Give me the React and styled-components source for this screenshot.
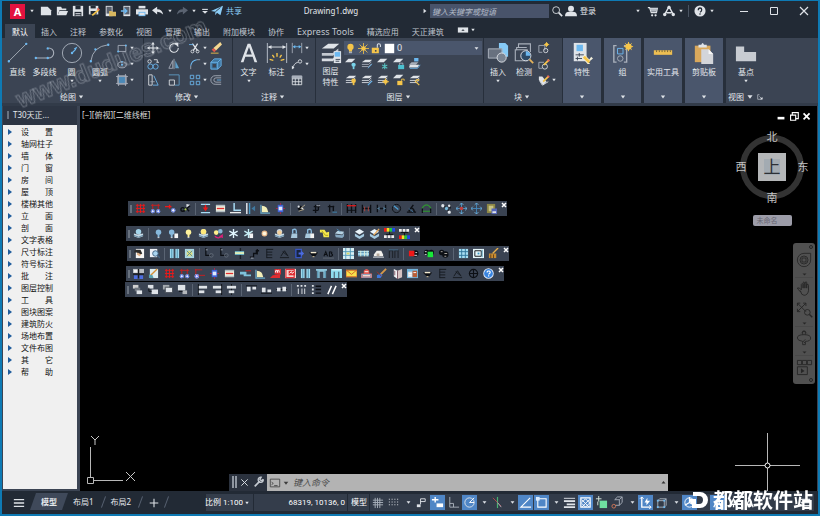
import React from 'react';
import styled, { createGlobalStyle } from 'styled-components';

const GlobalStyle = createGlobalStyle`
  * { box-sizing: border-box; }
  body { margin: 0; background: #000; overflow: hidden; }
  button, input, select {
    font: inherit; color: inherit; background: none; border: 0; padding: 0; margin: 0;
  }
  body, button, input { font-family: "Noto Sans", "Noto Sans CJK SC", sans-serif; font-size: 8px; }
`;

/* ---------- icon drawing ---------- */

const W = '#dfe3e8';
const G = '#a9b0bb';
const B = '#6cb8f0';
const SB = '#a8dcf5';
const Y = '#f5c54a';
const R = '#f01818';
const K = '#0c0f14';
const N = 'none';

const ring = (x, y, r) =>
  `M${x - r} ${y}a${r} ${r} 0 1 0 ${2 * r} 0a${r} ${r} 0 1 0 ${-2 * r} 0z`;
const box = (x, y, w, h) => `M${x} ${y}h${w}v${h}h${-w}z`;
const s = (d, color = W, width = 1) => ({ d, stroke: color, fill: N, width });
const f = (d, color = W) => ({ d, stroke: N, fill: color, width: 0 });

const stack = (color) => [
  f('M5 2h8l-3 3H1z', W),
  s('M1 7.5h8l3-3M1 10h8l3-3', color),
];
const bulb = (c, x = 6) => [f(ring(x, 4.5, 3), c), f(box(x - 1, 7, 2, 3), c), f(box(x - 1, 10, 2, 1), W)];
const cloud = (c) => [f(ring(6, 4, 3), c), f('M1 6l4 1 6-1v3l-5 2-5-2z', '#c6d8e4'), s('M1 8l5 2 5-2', '#56809c')];
const blueDots = [f(ring(3, 9, 2.2), '#e8ecff'), s(ring(3, 9, 1.7), '#4060d8'), f(ring(9, 9, 2.2), '#e8ecff'), s(ring(9, 9, 1.7), '#4060d8')];
const flake = (c) => [s('M6 1v10M1.500 3.500l9 5M1.500 8.500l9-5', c, 1.5)];
const page = f('M7 6h4v5H7z', '#f4f4f4');
const stars = [s('M4 4l4 4M8 4l-4 4M6 3v6M3 6h6', K, 1.5), f(ring(8, 6, 1.2), W), f(ring(4, 4, 1.2), W)];

const icons = {
  /* quick access, 14 grid */
  fresh: [f('M1 2h8l4 4v6H1z')],
  open: [f('M1 2h5l1 2h5v2H4l-2 6H1z'), f('M4 7h10l-2 5H2z')],
  save: [f('M1 1h12v12H1z'), f(box(4, 1, 6, 4), '#222a35'), f(box(3, 8, 8, 5), '#222a35'), s('M4 10h6M4 12h6', W)],
  saveas: [f('M1 1h11v10H1z'), f(box(3, 1, 6, 3), '#222a35'), f(box(3, 7, 7, 4), '#222a35'), s('M5 12l8-7', Y, 2), s('M11 4l2 2', '#e06050', 2)],
  webOpen: [f(box(2, 1, 8, 12)), f(box(3, 2, 6, 8), '#59616e'), f('M6 7h3l1 1h4v5H6z', '#d8b860')],
  webSave: [f(box(4, 1, 8, 12)), f(box(5, 2, 6, 9), '#59616e'), s('M1 7h6M5 4l3 3-3 3', B, 1.5)],
  print: [f(box(3, 1, 8, 3)), f(box(0, 5, 14, 6)), f(box(3, 8, 8, 5), '#6cb8f0'), f(box(4, 9, 6, 3), W)],
  undo: [f('M0 6l6-4v3q6 0 7 6-3-3-7-3v3z')],
  redo: [f('M14 6L8 2v3q-6 0-7 6 3-3 7-3v3z', '#5a6371')],
  plane: [f('M0 7L14 1l-3 11-4-3-2 3V8z', '#8ccdf6'), s('M5 8l6-5', '#222a35')],
  search: [s(ring(6, 6, 4)), s('M9 9l4 4', W, 2)],
  user: [f(ring(7, 4.5, 3.5)), f('M0 13q0-5 5-5h4q5 0 5 5z')],
  cart: [s('M1 3h2l2 6h6l1-5H4', W, 1.5), f('M4 4h8l-1 4H5z', '#b4bac2'), f(ring(6, 12, 1.3)), f(ring(10, 12, 1.3))],
  autodesk: [s('M2 11L7 2l5 9M4 9h6', W, 1.6), f(ring(7, 3, 2)), f(ring(2, 11, 2)), f(ring(12, 11, 2))],
  help: [f(ring(7, 7, 6.5)), s('M5 6q0-2.500 2-2.500t2 2-2 3', '#222a35', 1.5), f(box(6, 10, 2, 1), '#222a35')],
  min: [s('M3 7.5h8')],
  max: [s(box(3.5, 3.5, 7, 7))],
  close: [s('M3 3l8 8M11 3l-8 8', W, 1.2)],
  ribbonMode: [f(box(1, 4, 12, 6)), f('M5 8l2-2 2 2z', '#222a35')],
  caret: [f('M4 5h6l-3 4z')],
  caretDark: [f('M3 5h8l-4 5z', '#3c3c3c')],
  caretDim: [f('M3 5h8l-4 4z', '#262626')],
  caretUp: [f('M3 9h8l-4-5z', '#333')],
  caretLine: [f('M3 7h8l-4 4z'), f(box(3, 4, 8, 1.5))],
  tri: [f('M5 4l4 3-4 3z')],

  /* ribbon large, 24 grid */
  line: [s('M2 21L21 2', G), f(ring(2, 21, 1.3), B), f(ring(21, 2, 1.3), B)],
  pline: [s('M2 17.500h14a5 5 0 0 0 0-11', G, 1.2), f(ring(2, 17.5, 1.3), B), f(ring(15, 17.5, 1.3), B), f(ring(15, 7, 1.3), B)],
  circle: [s(ring(12, 12, 10.5), G), s('M12 12l4-4', B, 1.3), f(ring(12, 12, 1.3), B), f('M18 5l-4 2 2 2z', B)],
  arc: [s('M2 21Q4 5 21 3', G), f(ring(2, 21, 1.3), B), f(ring(7, 8, 1.3), B), f(ring(21, 3, 1.3), B)],
  text: [f('M3 22L10.500 2h3L21 22h-3l-2-6H8l-2 6zM9 13.500h6L12 5.500z')],
  dim: [s('M1.500 1v22M22.500 1v22', G, 1.2), s('M3 5.500h18', W), f('M2 5.500l4-2v4zM22 5.500l-4-2v4z'), s('M12 12v4M7 14l2 3M17 14l-2 3M4 19l4 1M20 19l-4 1', Y, 1.5)],
  layerProps: [f('M9 2h12l-6 5H2z'), f('M2 12h12l6-5v3l-6 5H2z', '#c4c9d0'), f('M2 18h12l3-3v3l-3 3H2z', '#d8dce2'), f(box(15, 10, 8, 13)), f(box(16, 11, 6, 5), B), s('M17 19h5M17 21h4', '#3b4453')],
  insert: [f('M13 1h7l3 3v12H13z', '#86caf6'), f(box(1, 7, 15, 11), '#68717f'), s(box(1.5, 7.5, 15, 10), G), f(ring(16, 17, 5), '#7a8492'), s(ring(16, 17, 5), W)],
  inspect: [s('M6 6V2h13v9M4 9V6h11', G, 1.2), s('M2.500 8.500h13v12h-13z', G, 1.2), f(ring(14, 15, 5.5), '#2d4964'), s(ring(14, 15, 5.5), W), f('M14 15v-5a5 5 0 0 1 5 5z', B), s('M18 19l4 4', '#e3b25b', 2)],
  props: [f(box(3, 1, 14, 20), W), f(box(6, 3, 7, 7), B), s('M5 14h9M9 12v4M5 18h7M7 16v4', '#3b4453'), f('M12 17l3-3 5 5 2-3 2 2-5 4 2 2-2 1z', '#f4f0dc'), s('M14 16l6 6', Y, 3)],
  group: [s('M5 4H2v18h3M13 4h3v18h-3', G, 1.5), s(box(6, 7, 6, 6), B), s(ring(9, 18, 3), G), f(ring(18, 5, 3.5), Y), s('M18 0v10M13 5h10M14.500 1.500l7 7M21.500 1.500l-7 7', Y)],
  measure: [f(box(2, 9, 20, 5), '#eebf52'), s('M5 9v2M8 9v2M11 9v2M14 9v2M17 9v2M20 9v2', '#6b5d35')],
  paste: [f(box(2, 4, 17, 18), '#d9a85c'), f('M6 6V3h3q1.500-4 3 0h3v3z', W), f('M9 8h8l5 5v11H9z', '#d3d5da'), f('M17 8v5h5z', '#f7f7f7')],
  base: [f('M1 5h9v6h13v10H1z', '#c8ccd2')],

  /* ribbon small, 14 grid */
  rect: [s(box(2.5, 4, 9, 7), G), f(ring(2.5, 11, 1.2), B), f(ring(11.5, 4, 1.2), B)],
  ellipse: [s('M2 8a5 3.500 0 1 0 10 0a5 3.500 0 1 0 -10 0z', G), f(ring(7, 8, 1.2), B), f(ring(7, 4.5, 1), B)],
  hatch: [f(box(3, 3, 8, 8), '#4b89b8'), s('M2 2h10v10H2zM3 0v14M11 0v14M0 3h14M0 11h14', G)],
  move: [s('M7 1v12M1 7h12', W, 1.2), f('M7 0l2 3H5zM7 14l2-3H5zM0 7l3-2v4zM14 7l-3-2v4z')],
  rotate: [s('M10 3A5 5 0 1 0 12 7', W, 1.2), f('M7 1h5v5z')],
  trim: [s('M4 2l6 8M10 2L5 10', W, 1.5), s(ring(4, 11, 1.7)), s(ring(10, 11, 1.7)), s('M0 3h5', B)],
  erase: [f('M12 0l2 3-7 7-3-3z', '#f3d690'), f('M4 7l3 3-2 2-3-3z', '#e0584c'), s('M1 13h9', Y)],
  copy: [s(ring(3, 4, 2)), s('M8 2h4v3M11 5h3', W), s(ring(4, 10, 3), B), s(ring(10, 10, 3), B)],
  mirror: [s('M1 12L5.500 3v9zM7 1v12', G), f('M8.500 12V3L13 12z', '#5f9fca')],
  fillet: [s('M2 13V9', G), s('M2 9Q3 3 9 2', B, 1.2), s('M9 2h4', G)],
  solid: [f('M1 5l4-4h8v8l-4 4H1z', '#3e749d'), s('M1 5h8v8H1zM1 5l4-4h8v8l-4 4M9 5l4-4', B), f(box(3, 7, 4, 4), '#3b4453')],
  stretch: [s('M2 1h4v12H2z', W), s('M8 2l5 11H7', B), s('M4 9h5', G)],
  scale: [s('M1 1h12v12H8', '#5f9fca'), s(box(1.500, 7, 6, 6))],
  array: [s('M1.500 1.500h4v4h-4zM8.500 1.500h4v4h-4zM1.500 8.500h4v4h-4zM8.500 8.500h4v4h-4z', B)],
  offset: [s('M13 2H6a5 5 0 0 0 0 10h7', G), s('M13 4.500H7a2.500 2.500 0 0 0 0 5h6', G), s('M13 7H8', B)],
  linear: [s('M1.500 1v12M12.500 1v12', G), s('M3 5.500h8', B), f('M2 5.500l3-2v4zM12 5.500l-3-2v4z', B)],
  leader: [s(ring(10.5, 4, 2)), s('M8 5q-5 1-6 8', W), f('M1 13v-4l3 2z')],
  table: [s('M1.500 2.500h11v10h-11zM1.500 5.500h11M1.500 9h11M5 5v8M9 5v8'), f(box(1, 2, 12, 3), G)],
  bulbBig: [f(ring(7, 5, 4), Y), f(box(5, 8, 4, 3), Y), f(box(5, 11, 4, 2), G)],
  sun: [f(ring(7, 7, 3), Y), s('M7 0v14M0 7h14M2 2l10 10M12 2L2 12', Y)],
  unlock: [f(box(1, 6, 9, 7), Y), s('M8 6V3q0-2 2-2t2 2v2', W, 1.3), f(box(5, 9, 2, 2), '#3b4453')],
  white: [f(box(1, 1, 12, 12), '#fff')],
  lOff: [f('M4 1h8l-4 4H0z'), f(ring(10, 8, 2.5), '#79d3ea'), f(box(9, 10, 2, 3), '#79d3ea')],
  lIso: [...stack(G), s('M8 12l5-5', B)],
  lFreeze: [f('M4 1h8l-4 4H0z'), s('M9 6v7M6 8l6 4M6 12l6-4', '#57c0c0', 1.3)],
  lLock: [f('M4 1h8l-4 4H0z'), f(box(6, 8, 7, 5), '#4cc0d0'), s('M7.500 8V6h4v2', G)],
  lMatch: [f('M3 5h8l-3 3H0z', G), f('M6 0h5v4H6z', B), f('M1 8h11l-2 3H0z'), s('M1 12h9l3-4', B)],
  lOn: [...stack(W), f(ring(10, 8, 2.7), Y), f(box(9, 10, 2, 3), Y)],
  lUniso: [...stack(W), s('M8 13l5-5', B, 1.3)],
  lThaw: [...stack(W), f(ring(10, 9, 2.5), Y), s('M10 5v8M6 9h8', Y)],
  lUnlock: [f('M4 1h8l-4 4H0z'), f(box(5, 8, 6, 5), Y), s('M10 8V6h3v2', Y)],
  lPrev: [...stack(W), s('M7 8l5 5M8 7h4', Y, 1.5)],
  bCreate: [s('M1 4h7v6M1 4v8h4', G), s(ring(9, 10, 2.5)), f(ring(10, 3, 2), Y), s('M10 0v6M7 3h6', Y)],
  bEdit: [s('M1 5h6M1 5v7h4', G), s(ring(8, 10, 3)), s('M7 8l6-6', Y, 2), s('M11 2l2 2', '#e56b59', 2)],
  bAttr: [f('M1 3h4l5 6-4 4-5-6z'), s('M6 9l6-6', Y, 2), s('M11 2l2 2', '#e56b59', 2), s('M2 8l3 5 7-4', W)],
  launch: [s('M3 3h3M3 3v8h8V8M6 6l4 4'), f('M11 11V7l-4 4z')],

  /* floating bars, 12 grid */
  grid: [s('M2.500 1v10M6 1v10M9.500 1v10M1 2.500h10M1 6h10M1 9.500h10', R)],
  axis: [s('M1 2.500h10M3 1v6M9 1v6', '#d01c1c'), ...blueDots],
  axisOne: [s('M0 4h7M5 2v4', R, 1.5), f(ring(9, 8, 2.4), '#f0f2ff'), s(ring(9, 8, 1.9), '#4060d8')],
  axisRow: [s('M1 2h8M2 1v8M5 8h7', '#d01c1c'), f(ring(3, 9, 2.4), '#edf'), s(ring(3, 9, 1.8), '#4060d8')],
  bird: [s(ring(3, 7, 2), K, 1.5), s('M4 9l7-6M6 5l4 4', K, 1.5), f('M7 1l4 1-4 3z'), f(ring(6, 7, 1.2), '#a8c858')],
  press: [s('M1 1.500h10M1 10.500h10', SB, 1.3), s('M6 2v4', R, 1.5), f('M3 5h6L6 9z', R)],
  wall: [f(box(1, 2, 10, 8), '#f4f3df'), s('M1 3h10M1 9h10', '#93a6b8'), s('M2 6h8', '#e03030', 1.5)],
  corner: [s('M4.500 0v8H12', SB, 1.6), s('M0 10.500h12', '#eee', 1.5)],
  vwall: [s('M2 0v12', '#f0f4fa', 1.5), s('M5 0v12', '#4b9bc8', 1.5), f('M7 6l4-3v6z', '#3f78a0')],
  door: [f('M2 10V3q6 0 7 7z', '#f4efb8'), s('M1 2v9h10', '#6aa9c8', 1.3)],
  column: [s('M6 0v12M1 6h10', '#b02440'), f(box(3, 2, 6, 8), '#4062d8'), f(box(4, 4, 4, 4), '#dfe9ff')],
  wand: [...stars, s('M6 6l5-4M4 9l6-2', '#b5a98c')],
  posts: [s('M3 4h7M5 2v9M8 2v6M2 8h6', K, 1.5), s('M6 3h4', G)],
  posts2: [s('M2 4h7M4 2v8M8 3v6', K, 1.5), s('M7 10h5', '#3d85b0')],
  dimH: [s('M1.500 1v10M6 1v10M10.500 1v10', K, 1.5), s('M1 3h10', R, 1.3), s('M1 8h10', K)],
  dimR: [s('M1.500 2v9M10.500 2v9M1 6h10', K, 1.4), s('M4 4v5M8 4v5', '#b64640')],
  dimL: [s('M1.500 2v8M10.500 2v8M1 6h10', K, 1.4), f('M1 6l3-2v4zM11 6L8 4v4z', '#517892')],
  dimC: [s(ring(6, 6, 4.5), K), s('M3 3l5 4', '#4fa3d8', 1.3)],
  dimA: [s('M1 10h10M3 9l5-7M5 5q4 1 4 5', K, 1.5), s('M3 6l5 4', '#3b6d94')],
  dimG: [s('M1 6q5-8 10 0', '#309034', 1.5), s('M1.500 6v5M10.500 6v5', K, 1.4), s('M2 9h8', '#309034', 1.3)],
  nodes: [s('M2 2l8 8M10 2v4', K, 1.3), f(ring(2, 3, 1.8)), f(ring(6, 6, 1.8), '#78b8d8'), f(ring(9, 10, 1.8)), f(ring(9, 3, 1.4))],
  moveR: [s('M6 0v12M0 6h12', '#4b97c9'), f(ring(6, 6, 2), '#c04040'), s('M4 2l2-2 2 2M4 10l2 2 2-2M2 4L0 6l2 2M10 4l2 2-2 2', '#76b8e0')],
  moveB: [s('M6 0v12M0 6h12', '#4585b8'), s('M4 2l2-2 2 2M4 10l2 2 2-2M2 4L0 6l2 2M10 4l2 2-2 2', '#76b8e0')],
  clip: [f(box(1, 1, 9, 10), '#8e8846'), f(box(3, 3, 5, 6), '#c8c484'), f(box(6, 6, 6, 6), '#5466b8'), f(box(7, 9, 4, 2), W)],
  cloud: cloud('#a4d4ea'),
  bulbB: bulb('#86b8dc'),
  bulbBP: [...bulb('#86b8dc', 4), page],
  bulbY: bulb('#fff29c'),
  bulbYS: [...cloud('#c6e0f0'), f(ring(6, 4, 3), '#ffe979')],
  bulbSwap: [f(ring(3.5, 5, 2.5), '#fff08c'), f(ring(8, 3.5, 2.5), '#89b8d8'), s('M2 9q4 4 8-1M7 10l3-2v3', '#d82078', 1.5)],
  flake: flake('#e2f7ff'),
  flakeP: [...flake('#c4ecf4'), page],
  dot: [f(ring(6, 6, 3.2), '#e9b98c'), f(ring(6, 6, 2), '#fff6dd')],
  sunS: [...cloud('#c4d4e4'), f(ring(6, 5, 2.5), '#f4d09c')],
  lockS: [f('M3 6h6v5H2z', '#a8c8dc'), s('M4 6V2q4-2 4 2v2', '#86b8dc', 1.5)],
  lockP: [f('M2 6h6v5H1z', '#a8c8dc'), s('M4 6V2q4-2 4 2v2', '#86b8dc', 1.5), page],
  yellow: [f('M1 2h5l2 3 3-1v6H5L4 5H1z', '#f4e84c'), s('M3 3l4 5h3', '#a89c20')],
  layersS: [f('M4 3l7 1-2 3-8-1z', '#b8d4e4'), f('M1 7l8 1v3l-7-1zM9 8l2-3v4l-2 2z', '#86a8c0'), s('M3 1l4 3', '#4a86ad')],
  stackS: [f('M1 4l5-3 5 3-5 3z', '#eaf4fa'), f('M1 6l5 3 5-3v3l-5 3-5-3z', '#a6cae0')],
  stackE: [f('M1 4l5-3 5 3-5 3z', '#eaf4fa'), f('M1 6l5 3 5-3v3l-5 3-5-3z', '#a6cae0'), s('M5 8l6-7', '#e8a858', 1.5)],
  rainbowT: [f(box(0, 0, 3, 4), R), f(box(3, 0, 3, 4), '#f4e020'), f(box(6, 0, 3, 4), '#20c840'), f(box(9, 0, 3, 4), '#2048f0'), s('M6 4v3M2 7h8', K), f('M0 8h3v3H0zM4 8h3v3H4zM8 8h3v3H8z', '#eee')],
  rainbowB: [f(box(0, 8, 3, 4), R), f(box(3, 8, 3, 4), '#f4e020'), f(box(6, 8, 3, 4), '#20c840'), f(box(9, 8, 3, 4), '#2048f0'), s('M6 5v3M2 5h8', K), f('M0 1h3v3H0zM4 1h3v3H4zM8 1h3v3H8z', '#eee')],
  photo: [f(box(2, 1, 9, 10), '#f5f5f5'), f('M1 2h6l2 4-3 2-3-3H0z', '#2b2b2b'), f('M4 5l4 2-2 2-3-2z', '#e0b088')],
  lens: [f(box(1, 1, 8, 9), '#eef2f8'), f(ring(7, 6, 3), '#a9d4f0'), s(ring(7, 6, 3), '#406080'), s('M9 8l3 3', '#406080', 1.5)],
  bars: [f(box(1, 1, 4, 10), '#9fd9ee'), f(box(7, 1, 4, 10), '#9fd9ee'), s('M3 1v10M9 1v10', '#4d91ad')],
  sheetY: [f(box(1, 1, 10, 10), '#a8d6e4'), f(box(3, 3, 6, 6), '#d9dc80'), s('M3 3l6 6M9 3l-6 6', '#54889a')],
  elbow: [s('M2 0v8h5', K, 1.4), s(ring(8, 8, 2), '#606976'), s('M2 2h2', G)],
  beam: [s('M7 0v12', '#1a2028', 1.5), f(box(1, 4, 10, 3), '#e8f2b8'), s('M1 4h10M1 7h10', '#64b4d0')],
  step: [s('M1 10h4V6h3V3h3M9 1v6', K, 1.4), s('M2 11h3', G)],
  comb: [s('M3 1v10M3 1.500h7M3 4.500h6M3 7.500h6M3 10.500h6', '#15191f')],
  peak: [s('M1 10.500h10M2 9l4-6 4 6M4 4l5 4', '#15191f')],
  exit: [f(box(1, 1, 7, 10), '#182440'), s(box(2, 1.5, 6, 9), '#3856c0', 1.5), f('M5 5h3V3l3 3-3 3V7H5z', '#4c6ce0')],
  cup: [f('M1 5h10l-3 4H5z', K), s('M3 5h6', '#f2ead0', 1.5), f(box(5, 9, 2, 1), '#e8d0a0')],
  ab: [s('M1 9l2-5 2 5M1 7h3M7 4v5h2q3-1 0-3 2-2-2-2', K, 1.1), s('M0 11h12', '#606874')],
  map: [f(box(0, 0, 12, 12), '#d8eef4'), s('M3 0v12M8 0v12M0 4h12M0 8h12', '#4e98b8'), f(box(4, 5, 3, 2), '#d8d86a')],
  strip: [f(box(0, 3, 12, 6), '#a8dcf0'), s('M0 5h12M0 8h12', '#558eae'), s('M3 3v6M7 3v6M10 3v6', '#e4f2da')],
  roof: [f('M1 9h10V7L9 3H4L1 7z', '#f2f0ec'), f(box(4, 6, 3, 3), '#b6a99b'), s('M0 10h12', W)],
  gates: [s('M1 3h4v8M7 3h4v8M1.500 3v8M7.500 3v8', '#20262e', 1.3), s('M1 2h10', '#446a88')],
  faceR: [f(ring(8, 6, 3.5), K), f(box(1, 3, 6, 6), R), s('M8 5h2M7 8h3', W)],
  faceG: [f(ring(4, 5, 3), K), f(ring(9, 5, 3), K), f(box(5, 4, 6, 6), '#18e838'), s('M2 4h2M2 7h2', W)],
  faceK: [f(ring(4, 5, 3), K), f(ring(8, 7, 3.5), K), s('M3 4h2M7 6h3M7 9h2', '#b4aea6')],
  tiles: [f(box(1, 1, 10, 10), '#a8def2'), s('M1 4h10M1 8h10M4 1v10M8 1v10', '#2f7499')],
  frame: [f(box(0, 1, 12, 10), '#e8f8fc'), s(box(2, 3, 7, 6), K), f(box(5, 5, 2, 2), '#3a97c4'), s('M10 2v8', '#4d98b5')],
  broom: [s('M5 6l6-6', '#e8b04c', 1.5), f('M1 6h8v5H1z', '#c88c30'), s('M3 7v4M6 7v4', '#60401c')],
  bench: [f(box(0, 1, 12, 5), '#b9bdc2'), f(box(1, 2, 4, 3), '#f0f0f0'), s('M0 6.500h12M6 1v10', '#16191f', 1.5), f(box(1, 8, 4, 4), '#4c6ce0'), f(box(7, 8, 4, 4), '#4c6ce0')],
  note: [f(box(2, 1, 9, 10), '#dcecf0'), s('M3 8l7-7', '#d49038', 1.5), f('M1 7l4 1 1 3H1z', '#58a0b0')],
  pipe: [f('M0 4h7v3h5v2H4V7H0z', '#7fc2dc'), s('M6 3h6', '#b02828', 1.3)],
  m2: [f('M5 1h7v6H5zM3 8l8-1v4H0z', '#e02c30'), s('M6 5V3q2-1 2 0v2-2q2-1 2 0v2', '#fff')],
  m2b: [f(box(0, 1, 12, 10), '#f3d4cf'), s(box(1, 1.5, 9, 9), '#e03038', 1.3), f(box(4, 3, 7, 5), '#e02c30'), s('M5 6l2-2 1 2 2-2', '#fff')],
  arch: [f('M0 1h12v2h-1v8H8V4H4v7H1V3H0z', '#8fc7dc'), s('M2 3v8M10 3v8', '#3d7896')],
  arch2: [f('M0 1h12v10H9V4H8v7H4V4H3v7H0z', '#8fdcee'), s('M1 2h10', '#f2ffff')],
  mail: [f(box(0, 2, 12, 8), '#f6e14c'), s('M0 2l6 5 6-5M0 2.500h12v7H0z', '#d06028')],
  stamp: [f('M3 3q3-4 6 0v3h3v5H0V6h3z', '#e85850'), s('M2 8.500h8M4 4h4', '#f0d8d0', 1.5), s('M1 7h10v3H1z', '#7fb4d8')],
  brush: [s('M5 7l6-6', '#d89848', 2), f('M1 8l4-2 2 2-2 3H1z', '#3c78dc'), s('M1 4l5 5', '#a83020')],
  book: [f('M2 1l4 2v9L2 9z', '#f2f2f4'), f('M6 3l5-2v9l-5 2z', '#d6c2c2'), s('M6 3v9M3 3v5', '#7c5260')],
  report: [f(box(0, 1, 12, 10), '#72b4dc'), f(box(1, 4, 5, 6), W), f(box(6, 3, 5, 7), '#b85e38'), s('M7 5h3M2 6h3M2 8h3', '#fff')],
  globe: [s(ring(6, 6, 4.5), K, 1.2), s('M6 1v10M1 6h10', K, 1.2)],
  helpB: [f(ring(6, 6, 5.7), '#e8f1ff'), f(ring(6, 6, 4.8), '#3884e0'), s('M4.500 5q0-2 2-1.700t1 2.300L6 7', '#fff', 1.3), f(box(5.5, 8, 1.3, 1.3), '#fff')],
  ordA: [f(box(1, 1, 6, 4), '#d0d0d0'), f(box(3, 4, 6, 4), '#707780'), f(box(5, 7, 6, 4), W)],
  ordB: [f(box(1, 1, 6, 4)), f(box(5, 6, 7, 5)), s('M2 4v4h3', K)],
  ordC: [f(box(1, 1, 7, 5), '#a4a9ae'), f(box(4, 4, 7, 5), W), s(box(3.5, 3.5, 8, 6), '#50565e')],
  ordD: [f(box(1, 1, 8, 6)), f(box(6, 7, 5, 4), '#b4b8bc'), s('M2 8h4', K)],
  alL: [s('M1.500 0v12', K), f(box(2, 2, 9, 3)), f(box(2, 7, 6, 3))],
  alR: [s('M10.500 0v12', K), f(box(1, 2, 9, 3)), f(box(4, 7, 6, 3))],
  alC: [s('M6 0v12', K), f(box(1, 2, 10, 3)), f(box(3, 7, 6, 3))],
  alT: [s('M0 2h12', K), f(box(1, 3, 4, 5)), f(box(7, 3, 4, 3))],
  alB: [s('M0 10h12', K), f(box(1, 4, 4, 5)), f(box(7, 6, 4, 3))],
  alM: [s('M0 6h12', K), f(box(1, 4, 4, 4)), f(box(7, 3, 4, 5))],
  dist: [f('M1 1h2v2H1zM5 1h2v2H5zM9 1h2v2H9zM2 5h1v6H2zM6 5h1v6H6zM9 5h1v6H9z')],
  list: [f('M1 1h2v2H1zM1 5h2v2H1zM1 9h2v2H1z'), s('M5 2.500h6M5 6h6M5 10h6', K, 1.5)],
  slashes: [s('M2 11L6 2M7 11l4-9', '#fff', 1.6)],
  xMark: [s('M2 2l8 8M10 2l-8 8', '#fff', 3)],

  /* status bar, 14 grid */
  plus: [s('M7 1v12M1 7h12', W, 1.5)],
  sGrid: [s('M4.500 2v11M9.500 2v11M2 4.500h11M2 9.500h11M7 2v11M2 7h11', G)],
  sDots: [f([2, 5, 8, 11].map((x) => [3, 6, 9].map((y) => box(x, y, 1, 1)).join('')).join(''))],
  sInfer: [f(box(2, 9, 4, 3)), s('M6 9V3h5v3H6', W)],
  sDyn: [s('M1 4h7M4.500 1v6', '#fff', 1.5), f(box(6, 8, 7, 4), '#fff')],
  sOrtho: [s('M3 1v11h10M3 8h4v4', G)],
  sPolar: [s(ring(7, 7, 5)), s('M7 7h5M7 7l5-5', '#fff')],
  sIso: [s('M7 1v12', '#48b070', 1.3), s('M2 2l9 9', '#b84a50'), s('M7 7l4 5', G)],
  sTrack: [s('M12 2L2 12h11', '#fff', 1.2)],
  sSnap: [s(box(3, 3, 9, 9), '#fff', 1.2), f(box(1, 1, 4, 4), '#dcecff')],
  sWeight: [s('M1 2.500h12'), s('M1 5.500h12', W, 2), s('M4 9h9M1 12h12', W, 2)],
  sTrans: [s('M2 2h10v10H2z', '#fff', 1.3), s('M3 4l8 8M3 8l4 4M7 3l5 5M11 4l-8 8M7 3L3 7M12 7l-5 5', '#fff')],
  sCycle: [f(box(5, 5, 8, 8), '#6fe0a0'), s('M1 3h6M4 0v6M3 6v4', '#d9e8dd')],
  s3d: [s('M4 4l3-3h5v6l-3 3H5M4 4h5v6M9 4l3-3', G), s(ring(3, 11, 2), '#d27858')],
  sUcs: [s('M3 1v11h10', '#fff', 1.4), s('M1 3l2-2 2 2M11 10l2 2-2 2', '#fff'), f('M9 2L6 7h2v3l4-5H9z', '#fff')],
  sFilter: [s('M3 5l2-2h7v7l-2 2H3zM3 5h7v7M10 5l2-2', G), f(box(2, 4, 2, 2), B), f(box(9, 4, 2, 2), B), f(box(2, 11, 2, 2), B), f(box(9, 11, 2, 2), B)],
  sGizmo: [s(ring(7, 7, 5), '#fff'), s('M7 7V1M7 7l5 3M7 7l-5 3', '#fff', 1.3)],
  sAnno: [s('M3 12L7 3l4 9M7 8v4M4 9h6', '#fff', 1.4)],
  menu: [s('M1 3h12M1 7h12M1 11h12', W, 1.6)],

  /* canvas */
  wMin: [f(box(3, 8, 8, 3), '#fff')],
  wRestore: [s('M5 6V3h7v7H9', '#fff', 1.3), s(box(3, 6, 6, 6), '#fff', 1.3)],
  wClose: [s('M3 4l7 7M10 4l-7 7', '#fff', 2)],
  wrench: [s('M2 12l6-6', '#c4c9d0', 2), s('M12 4L9.500 5.500 8 4l1.500-2.500a3 3 0 1 0 2.500 2.500', '#c4c9d0', 1.6)],
  prompt: [s(box(1.5, 2.5, 11, 9), '#444', 1), s('M3 6l2 1.500-2 1.500M6 10h4', '#444')],
  wheel: [s('M12 2a10 10 0 1 0 10 10V2z', '#262626', 1.3), s(ring(12, 12, 6), '#262626', 1.3), s(box(9, 9, 6, 6), '#262626', 1.3)],
  hand: [s('M6 13l-3-3q-1-2 2-1l2 2V5q1-2 2 0v4-6q1-2 2 0v6-6q2-2 2 0v6-4q2-1 2 1v6q-1 5-5 5-3 0-4-5z', '#262626')],
  zoomX: [s('M2 3l12 12M14 3L2 15M2 7V3h4M10 3h4v4M2 11v4h4', '#262626', 1.3), s(ring(16, 16, 4), '#262626', 1.3), s('M19 19l4 4', '#262626', 2)],
  orbit: [s('M10 7V2h4v5M10 17v5h4v-5M8 5l4-4 4 4M2 12q0-5 10-5t10 5-8 5M2 12q0 4 8 5M14 14l-3 3 3 3', '#262626', 1.3)],
  movie: [s('M2 2h6v6H2zM9 2h6v6H9zM16 2h6v6h-6zM2 11h14v11H2z', '#262626', 1.3), f('M7 13v7l5-3z', '#262626')],
};

const Drawing = styled.svg`
  display: block;
  flex: none;
  width: ${(p) => p.$size}px;
  height: ${(p) => p.$size}px;
`;

function Icon({ name, size = 14, grid = size }) {
  return (
    <Drawing $size={size} viewBox={`0 0 ${grid} ${grid}`} aria-hidden="true">
      {icons[name].map((p, i) => (
        <path key={i} d={p.d} stroke={p.stroke} fill={p.fill} strokeWidth={p.width} fillRule="evenodd" />
      ))}
    </Drawing>
  );
}

/* ---------- frame ---------- */

const Window = styled.div`
  height: 100vh;
  display: grid;
  grid-template-rows: auto auto auto minmax(0, 1fr) auto;
  border: 2px solid #0e7ab4;
  border-top-width: 1px;
  background: #222a35;
  color: #e4e8ec;
  line-height: 12px;
  overflow: hidden;
`;

const TitleBar = styled.header`
  display: flex;
  align-items: center;
  height: 20px;
  padding-left: 8px;
`;

const Logo = styled.button`
  width: 15px;
  height: 15px;
  background: #e3123f;
  color: #fff;
  font-size: 11px;
  line-height: 15px;
  font-weight: 700;
`;

const IconButton = styled.button`
  display: grid;
  place-items: center;
  flex: none;
  width: ${(p) => p.$w || 16}px;
  height: 16px;
  overflow: hidden;
`;

const Share = styled.button`
  display: flex;
  align-items: center;
  gap: 3px;
  color: #8ccdf6;
`;

const DocTitle = styled.h1`
  flex: 1;
  margin: 0;
  text-align: center;
  font-size: 8px;
  font-weight: 400;
`;

const SearchInput = styled.input`
  width: 119px;
  height: 14px;
  padding: 0 2px;
  background: #48536a;
  font-style: italic;
  &::placeholder { color: #b2bac6; opacity: 1; }
`;

const Account = styled.button`
  display: flex;
  align-items: center;
  gap: 3px;
  margin-right: 35px;
`;

const Rule = styled.span`
  width: 1px;
  height: 12px;
  margin: 0 3px;
  background: #4a5462;
`;

const WindowButtons = styled.div`
  display: flex;
  gap: 14px;
  padding: 0 6px 0 20px;
`;

const TabBar = styled.nav`
  display: flex;
  align-items: flex-end;
  height: 17px;
  padding-left: 3px;
`;

const Tab = styled.button`
  height: 14px;
  padding: 0 ${(p) => (p.$active ? 7 : 0)}px;
  margin-right: ${(p) => (p.$active ? 6 : 13)}px;
  font-size: ${(p) => (p.$latin ? 9 : 8)}px;
  line-height: 13px;
  white-space: nowrap;
  background: ${(p) => (p.$active ? '#3b4453' : 'none')};
  color: ${(p) => (p.$active ? '#fff' : '#c0c6cf')};
`;

/* ---------- ribbon ---------- */

const Ribbon = styled.div`
  display: flex;
  height: 68px;
  padding: 0 3px 0 1px;
  border-bottom: 3px solid #323b49;
  background: #3b4453;
`;

const Panel = styled.section`
  display: flex;
  flex-direction: column;
  flex: ${(p) => (p.$grow ? '1 0 auto' : '0 0 auto')};
  width: ${(p) => p.$w}px;
  border-right: ${(p) => (p.$grow ? 0 : p.$lit ? 3 : 1)}px solid #272f3b;
  background: ${(p) => (p.$lit ? '#4a566c' : '#3b4453')};
`;

const PanelBody = styled.div`
  display: flex;
  flex: 1;
  padding: 2px ${(p) => p.$pad || 0}px 0;
`;

const PanelTitle = styled.button`
  display: flex;
  align-items: center;
  justify-content: ${(p) => (p.$start ? 'flex-start' : 'center')};
  height: 13px;
  line-height: 13px;
  padding: 0 2px;
`;

const BigTool = styled.button`
  display: flex;
  flex-direction: column;
  align-items: center;
  flex: none;
  width: ${(p) => p.$w || 28}px;
  height: 50px;
  padding-top: 2px;
  line-height: 11px;
  white-space: ${(p) => (p.$wrap ? 'normal' : 'nowrap')};
`;

const BigLabel = styled.span`
  width: ${(p) => (p.$wrap ? '16px' : 'auto')};
  margin-top: ${(p) => (p.$wrap ? 1 : 2)}px;
`;

const CaretSlot = styled.span`
  height: 6px;
  display: grid;
  place-items: center;
  overflow: hidden;
`;

const SmallGrid = styled.div`
  display: grid;
  grid-template-columns: repeat(${(p) => p.$cols}, ${(p) => p.$w}px);
  grid-auto-rows: 16px;
  align-content: start;
`;

const SmallTool = styled.button`
  display: flex;
  align-items: center;
  height: 16px;
  padding-left: 1px;
`;

const LayerTools = styled.div`
  display: flex;
  flex-direction: column;
  gap: 1px;
  flex: 1;
  min-width: 0;
`;

const LayerCombo = styled.button`
  display: flex;
  align-items: center;
  gap: 2px;
  width: 100%;
  height: 14px;
  margin-top: 1px;
  padding: 0 1px;
  background: #4a566c;
  & > span { flex: 1; text-align: left; font-size: 9px; }
`;

function Big({ icon, label, w, caret, wrap }) {
  return (
    <BigTool $w={w} $wrap={wrap}>
      <Icon name={icon} size={22} grid={24} />
      <BigLabel $wrap={wrap}>{label}</BigLabel>
      {caret && <CaretSlot><Icon name="caret" size={8} grid={14} /></CaretSlot>}
    </BigTool>
  );
}

function Small({ items, cols = 1, w = 16 }) {
  return (
    <SmallGrid $cols={cols} $w={w}>
      {items.map(([icon, label, caret]) => (
        <SmallTool key={icon} aria-label={label}>
          <Icon name={icon} size={12} grid={14} />
          {caret && <Icon name="caret" size={8} grid={14} />}
        </SmallTool>
      ))}
    </SmallGrid>
  );
}

function Title({ children }) {
  return (
    <PanelTitle>
      {children}
      <Icon name="caret" size={10} grid={14} />
    </PanelTitle>
  );
}

const litPanels = [
  ['props', '特性', 41],
  ['group', '组', 40],
  ['measure', '实用工具', 41],
  ['paste', '剪贴板', 41],
];

/* ---------- workspace ---------- */

const Workspace = styled.div`
  display: grid;
  grid-template-columns: 76px minmax(0, 1fr);
  column-gap: 2px;
  min-height: 0;
  background: #3b4453;
`;

const Palette = styled.aside`
  display: flex;
  flex-direction: column;
  min-height: 0;
  padding: 0 1px 2px;
`;

const PaletteHead = styled.div`
  display: flex;
  align-items: center;
  gap: 4px;
  height: 19px;
  padding: 0 4px 2px;
  background: #2d3543;
`;

const Grip = styled.span`
  width: 2px;
  height: 8px;
  background: #69727f;
`;

const MenuList = styled.ul`
  flex: 1;
  margin: 0;
  padding: 1px 0 0;
  list-style: none;
  background: #f0f0f0;
  color: #111;
`;

const MenuItem = styled.button`
  display: flex;
  align-items: center;
  gap: 9px;
  height: 12px;
  padding-left: 5px;
  white-space: pre;
`;

const Arrow = styled.span`
  border-left: 4px solid #1f5c9c;
  border-top: 3px solid transparent;
  border-bottom: 3px solid transparent;
`;

const Canvas = styled.main`
  position: relative;
  overflow: hidden;
  background: #000;
  margin-right: 1px;
`;

const ViewLabel = styled.div`
  padding: 3px 2px;
  font-size: 8px;
  color: #dcdcdc;
`;

const CanvasButtons = styled.div`
  position: absolute;
  top: 2px;
  right: 4px;
  display: flex;
  & > button { width: 13px; }
`;

const FloatBar = styled.div`
  position: absolute;
  left: ${(p) => p.$x}px;
  top: ${(p) => p.$y}px;
  width: ${(p) => p.$w}px;
  height: 15px;
  display: flex;
  align-items: center;
  padding-left: 2px;
  background: #3a4352;
`;

const BarTools = styled.div`
  flex: 1;
  display: flex;
  align-items: center;
  padding: 0 2px 0 1px;
`;

const BarTool = styled.button`
  flex: 1;
  min-width: 0;
  display: grid;
  place-items: center;
`;

const BarSep = styled.span`
  width: 1px;
  height: 12px;
  margin: 0 2px;
  background: #5a6473;
`;

const BarClose = styled.button`
  align-self: flex-start;
  width: 6px;
  height: 7px;
`;

const bars = [
  { x: 48, y: 95, w: 379, label: '轴网', tools: 'grid axis axisOne bird | press wall corner vwall door column | wand posts posts2 | dimH dimR dimL dimC dimA dimG | nodes moveR moveB clip' },
  { x: 46, y: 120, w: 294, label: '图层', tools: 'cloud | bulbB bulbBP bulbY bulbYS bulbSwap flake flakeP dot sunS lockS lockP yellow layersS | stackS stackE rainbowT rainbowB' },
  { x: 47, y: 140, w: 382, label: '工具', tools: 'photo lens | bars sheetY | elbow elbow beam step comb peak exit cup ab | map strip roof gates | faceR faceG faceK | tiles frame broom' },
  { x: 46, y: 160, w: 378, label: '常用', tools: 'bench note grid axis axisRow column wall pipe door m2 m2b bars arch arch2 mail stamp brush book report cup comb peak globe helpB' },
  { x: 45, y: 176, w: 222, label: '对齐', tools: 'ordA ordB ordC ordD | alL alR alC | alT alB alM | dist list slashes' },
];

const Compass = styled.div`
  position: absolute;
  top: 20px;
  right: 7px;
  width: 76px;
  display: grid;
  justify-items: center;
`;

const Dial = styled.svg`
  display: block;
  width: 76px;
  height: 82px;
  font-family: "Noto Sans CJK SC", sans-serif;
`;

const UcsName = styled.button`
  width: 39px;
  height: 11px;
  margin-top: 7px;
  padding: 0 0 0 4px;
  border-radius: 2px;
  background: #9c9ca8;
  color: #686874;
  font-size: 7px;
  line-height: 10px;
  text-align: left;
`;

const NavBar = styled.div`
  position: absolute;
  top: 137px;
  right: 2px;
  width: 22px;
  height: 141px;
  display: flex;
  flex-direction: column;
  align-items: center;
  justify-content: space-between;
  padding: 2px 2px;
  border-radius: 3px;
  background: #505050;
`;

const NavTool = styled.button`
  display: grid;
  place-items: center;
  width: 18px;
  height: 18px;
`;

const NavCaret = styled.button`
  display: grid;
  place-items: center;
  width: 18px;
  height: 7px;
  border-bottom: 1px solid #484848;
`;

const NavDot = styled.button`
  align-self: flex-end;
  width: 4px;
  height: 4px;
  border: 1px solid #262626;
  border-radius: 50%;
`;

const CommandBar = styled.form`
  position: absolute;
  left: 149px;
  right: 149px;
  bottom: 0;
  display: flex;
  height: 17px;
  background: #2b323e;
`;

const Dots = styled.span`
  width: 5px;
  margin: 2px 1px 3px 3px;
  background: radial-gradient(circle at 1px 1px, #9097a1 1px, transparent 1px) 0 0 / 3px 2px;
`;

const CommandField = styled.label`
  flex: 1;
  display: flex;
  align-items: center;
  gap: 1px;
  padding: 0 1px 0 2px;
  background: #b3b3b3;
`;

const CommandInput = styled.input`
  flex: 1;
  min-width: 0;
  padding-left: 2px;
  font-size: 9px;
  font-style: italic;
  color: #222;
  &::placeholder { color: #4a4a4a; opacity: 1; }
`;

const Overlay = styled.svg`
  position: absolute;
  left: ${(p) => p.$left};
  right: ${(p) => p.$right};
  bottom: 0;
  width: ${(p) => p.$w}px;
  height: 60px;
  pointer-events: none;
`;

/* ---------- status bar ---------- */

const StatusBar = styled.footer`
  display: flex;
  align-items: center;
  height: 23px;
  padding: 0 4px 0 10px;
  white-space: nowrap;
`;

const Layouts = styled.nav`
  display: flex;
  align-items: center;
  flex: none;
  width: 194px;
`;

const LayoutTab = styled.button`
  height: 17px;
  padding: 0 ${(p) => (p.$active ? 11 : 0)}px;
  margin: 0 ${(p) => (p.$active ? 1 : 7)}px 2px 4px;
  line-height: 16px;
  font-weight: ${(p) => (p.$active ? 700 : 400)};
  background: ${(p) => (p.$active ? '#3f495a' : 'none')};
  clip-path: ${(p) => (p.$active ? 'polygon(6px 0, 100% 0, calc(100% - 6px) 100%, 0 100%)' : 'none')};
`;

const Slash = styled.span`
  width: 1px;
  height: 12px;
  margin: 0 3px 2px 2px;
  background: #566070;
  transform: rotate(20deg);
`;

const Cell = styled.div`
  display: flex;
  align-items: center;
  justify-content: flex-end;
  flex: none;
  height: 17px;
  width: ${(p) => p.$w}px;
  padding: 0 2px 0 1px;
  margin-right: 1px;
  background: #343d4b;
  font-family: Roboto, "Noto Sans CJK SC", sans-serif;
  color: #fff;
`;

const Modes = styled.div`
  display: flex;
  align-items: center;
  flex: 1;
  min-width: 0;
  height: 17px;
  background: #323b49;
`;

const Mode = styled.button`
  display: grid;
  place-items: center;
  flex: none;
  width: 15px;
  height: 15px;
  margin-right: 1px;
  background: ${(p) => (p.$on ? '#4f86c6' : 'none')};
`;

const ModeCaret = styled.button`
  display: grid;
  place-items: center;
  flex: none;
  width: 12px;
  height: 15px;
`;

const Spring = styled.span`
  flex: 1;
`;

const modes = [
  ['sGrid', '栅格'], ['sDots', '捕捉', 0, 1], ['sInfer', '推断约束'], ['sDyn', '动态输入', 1],
  ['sOrtho', '正交'], ['sPolar', '极轴追踪', 1, 1], ['sIso', '等轴测草图', 0, 1], ['sTrack', '对象捕捉追踪', 1],
  ['sSnap', '对象捕捉', 1, 1], ['sWeight', '线宽'], ['sTrans', '透明度', 1], ['sCycle', '选择循环'],
  ['s3d', '三维对象捕捉', 0, 1], ['sUcs', '动态 UCS', 1], ['sFilter', '选择过滤', 0, 1], ['sGizmo', '小控件', 1, 1],
  ['sAnno', '注释可见性', 1], ['sAnno', '自动缩放'], ['sAnno', '注释比例'],
];

/* ---------- marks over the page ---------- */

const SiteMark = styled.div`
  position: fixed;
  left: 22px;
  top: 88px;
  font: 700 24px/24px "Liberation Sans", sans-serif;
  color: transparent;
  -webkit-text-stroke: 1px rgba(215, 220, 228, 0.34);
  transform: rotate(-22deg);
  transform-origin: 0 100%;
  pointer-events: none;
`;

const Brand = styled.div`
  position: fixed;
  right: 7px;
  bottom: 5px;
  display: flex;
  align-items: center;
  gap: 4px;
  font: 700 20px/22px "Noto Sans CJK SC", sans-serif;
  color: #fff;
  pointer-events: none;
`;

const BrandMark = styled.svg`
  width: 20px;
  height: 18px;
`;

const quick = [
  ['fresh', '新建'], ['open', '打开'], ['save', '保存'], ['saveas', '另存为'], ['webOpen', '从 Web 打开'],
  ['webSave', '保存到 Web'], ['print', '打印'], ['undo', '放弃'],
];
const tabs = ['默认', '插入', '注释', '参数化', '视图', '管理', '输出', '附加模块', '协作', 'Express Tools', '精选应用', '天正建筑'];
const menu = ['设　　置', '轴网柱子', '墙　　体', '门　　窗', '房　　间', '屋　　顶', '楼梯其他', '立　　面', '剖　　面', '文字表格', '尺寸标注', '符号标注', '批　　注', '图层控制', '工　　具', '图块图案', '建筑防火', '场地布置', '文件布图', '其　　它', '帮　　助'];

function Caret({ w = 8, label = '展开' }) {
  return <IconButton $w={w} aria-label={label}><Icon name="caret" size={8} grid={14} /></IconButton>;
}

export default function App() {
  return (
    <Window>
      <GlobalStyle />
      <TitleBar>
        <Logo aria-label="应用程序菜单">A</Logo>
        <Caret w={13} />
        {quick.map(([icon, label]) => (
          <IconButton key={icon} aria-label={label}><Icon name={icon} size={12} grid={14} /></IconButton>
        ))}
        <Caret />
        <IconButton aria-label="重做"><Icon name="redo" size={12} grid={14} /></IconButton>
        <Caret />
        <IconButton $w={13} aria-label="自定义"><Icon name="caretLine" size={10} grid={14} /></IconButton>
        <Share><Icon name="plane" size={12} grid={14} />共享</Share>
        <DocTitle>Drawing1.dwg</DocTitle>
        <IconButton $w={10} aria-label="展开搜索"><Icon name="tri" size={10} grid={14} /></IconButton>
        <SearchInput aria-label="搜索" placeholder="键入关键字或短语" />
        <IconButton aria-label="开始搜索"><Icon name="search" size={12} grid={14} /></IconButton>
        <Account><Icon name="user" size={12} grid={14} />登录</Account>
        <Caret w={14} />
        <IconButton aria-label="应用商店"><Icon name="cart" size={12} grid={14} /></IconButton>
        <IconButton aria-label="Autodesk"><Icon name="autodesk" size={12} grid={14} /></IconButton>
        <Caret />
        <Rule />
        <IconButton aria-label="帮助"><Icon name="help" size={12} grid={14} /></IconButton>
        <Caret />
        <WindowButtons>
          <IconButton aria-label="最小化"><Icon name="min" /></IconButton>
          <IconButton aria-label="最大化"><Icon name="max" /></IconButton>
          <IconButton aria-label="关闭"><Icon name="close" /></IconButton>
        </WindowButtons>
      </TitleBar>

      <TabBar>
        {tabs.map((t, i) => <Tab key={t} $active={i === 0} $latin={t === 'Express Tools'}>{t}</Tab>)}
        <IconButton $w={12} aria-label="功能区显示"><Icon name="ribbonMode" size={12} grid={14} /></IconButton>
        <Caret />
      </TabBar>

      <Ribbon>
        <Panel $w={141}>
          <PanelBody $pad={1}>
            <Big icon="line" label="直线" w={27} />
            <Big icon="pline" label="多段线" w={27} />
            <Big icon="circle" label="圆" w={27} caret />
            <Big icon="arc" label="圆弧" w={30} caret />
            <Small w={24} items={[['rect', '矩形', 1], ['ellipse', '椭圆', 1], ['hatch', '图案填充', 1]]} />
          </PanelBody>
          <Title>绘图</Title>
        </Panel>
        <Panel $w={89}>
          <PanelBody $pad={2}>
            <Small cols={3} w={21} items={[['move', '移动'], ['rotate', '旋转'], ['trim', '修剪', 1], ['copy', '复制'], ['mirror', '镜像'], ['fillet', '圆角', 1], ['stretch', '拉伸'], ['scale', '缩放'], ['array', '阵列', 1]]} />
            <Small w={20} items={[['erase', '删除'], ['solid', '分解'], ['offset', '偏移']]} />
          </PanelBody>
          <Title>修改</Title>
        </Panel>
        <Panel $w={83}>
          <PanelBody $pad={1}>
            <Big icon="text" label="文字" w={29} caret />
            <Big icon="dim" label="标注" w={27} />
            <Small w={22} items={[['linear', '线性', 1], ['leader', '引线', 1], ['table', '表格']]} />
          </PanelBody>
          <Title>注释</Title>
        </Panel>
        <Panel $w={168}>
          <PanelBody $pad={1}>
            <Big icon="layerProps" label="图层特性" w={27} wrap />
            <LayerTools>
              <LayerCombo aria-label="当前图层">
                <Icon name="bulbBig" size={11} grid={14} />
                <Icon name="sun" size={11} grid={14} />
                <Icon name="unlock" size={11} grid={14} />
                <Icon name="white" size={11} grid={14} />
                <span>0</span>
                <Icon name="caret" size={9} grid={14} />
              </LayerCombo>
              <Small cols={5} items={[['lOff', '关'], ['lIso', '隔离'], ['lFreeze', '冻结'], ['lLock', '锁定'], ['lMatch', '置为当前'], ['lOn', '打开所有'], ['lUniso', '取消隔离'], ['lThaw', '解冻'], ['lUnlock', '解锁'], ['lPrev', '上一个']]} />
            </LayerTools>
          </PanelBody>
          <Title>图层</Title>
        </Panel>
        <Panel $w={79}>
          <PanelBody $pad={1}>
            <Big icon="insert" label="插入" w={26} caret />
            <Big icon="inspect" label="检测" w={26} />
            <Small w={24} items={[['bCreate', '创建块'], ['bEdit', '编辑块'], ['bAttr', '编辑属性', 1]]} />
          </PanelBody>
          <Title>块</Title>
        </Panel>
        {litPanels.map(([icon, label, w]) => (
          <Panel key={icon} $w={w} $lit>
            <PanelBody><Big icon={icon} label={label} w={w - 3} /></PanelBody>
            <PanelTitle aria-label={`${label}选项`}><Icon name="caret" size={10} grid={14} /></PanelTitle>
          </Panel>
        ))}
        <Panel $w={80} $grow>
          <PanelBody><Big icon="base" label="基点" w={40} caret /></PanelBody>
          <PanelTitle $start>
            视图<Icon name="caret" size={12} grid={14} /><Icon name="launch" size={8} grid={14} />
          </PanelTitle>
        </Panel>
      </Ribbon>

      <Workspace>
        <Palette>
          <PaletteHead><Grip />T30天正...</PaletteHead>
          <MenuList>
            {menu.map((m) => <li key={m}><MenuItem><Arrow />{m}</MenuItem></li>)}
          </MenuList>
        </Palette>
        <Canvas>
          <ViewLabel>[−][俯视][二维线框]</ViewLabel>
          <CanvasButtons>
            <IconButton aria-label="最小化视图"><Icon name="wMin" size={12} grid={14} /></IconButton>
            <IconButton aria-label="还原视图"><Icon name="wRestore" size={12} grid={14} /></IconButton>
            <IconButton aria-label="关闭视图"><Icon name="wClose" size={12} grid={14} /></IconButton>
          </CanvasButtons>

          {bars.map((b) => (
            <FloatBar key={b.label} $x={b.x} $y={b.y} $w={b.w} role="toolbar" aria-label={b.label}>
              <Grip />
              <BarTools>
                {b.tools.split(' ').map((t, i) => (t === '|'
                  ? <BarSep key={i} />
                  : <BarTool key={i} aria-label={`${b.label} ${i + 1}`}><Icon name={t} size={11} grid={12} /></BarTool>))}
              </BarTools>
              <BarClose aria-label="关闭工具栏"><Icon name="xMark" size={6} grid={12} /></BarClose>
            </FloatBar>
          ))}

          <Compass>
            <Dial viewBox="0 -4 76 82" role="img" aria-label="ViewCube">
              <circle cx="38" cy="37" r="29" fill="none" stroke="#333" strokeWidth="6" />
              <rect x="24" y="23" width="28" height="28" fill="#b4b6b8" />
              <rect x="30" y="29" width="16" height="16" fill="#a3abb2" />
              <g textAnchor="middle" fill="#c4c4c4" fontSize="11">
                <text x="38" y="11">北</text>
                <text x="38" y="72">南</text>
                <text x="7" y="41">西</text>
                <text x="69" y="41">东</text>
                <text x="38" y="43" fontSize="17" fill="#2c3036">上</text>
              </g>
            </Dial>
            <UcsName>未命名</UcsName>
          </Compass>

          <NavBar>
            <NavDot aria-label="关闭导航栏" />
            <NavTool aria-label="导航控制盘"><Icon name="wheel" size={16} grid={24} /></NavTool>
            <NavCaret aria-label="控制盘选项"><Icon name="caretDim" size={7} grid={14} /></NavCaret>
            <NavTool aria-label="平移"><Icon name="hand" size={18} grid={20} /></NavTool>
            <NavTool aria-label="缩放"><Icon name="zoomX" size={17} grid={24} /></NavTool>
            <NavCaret aria-label="缩放选项"><Icon name="caretDim" size={7} grid={14} /></NavCaret>
            <NavTool aria-label="动态观察"><Icon name="orbit" size={16} grid={24} /></NavTool>
            <NavCaret aria-label="观察选项"><Icon name="caretDim" size={7} grid={14} /></NavCaret>
            <NavTool aria-label="ShowMotion"><Icon name="movie" size={17} grid={24} /></NavTool>
            <NavDot aria-label="导航栏设置" />
          </NavBar>

          <Overlay $left="0" $right="auto" $w={70} viewBox="0 0 70 60" aria-hidden="true">
            <path d="M10.500 47V16M13 49.500h30M7.500 46.500h6v6h-6z" fill="none" stroke="#b8b8b8" />
            <path d="M11 5l4 4 4-4M15 9v5M46 41l9 9M55 41l-9 9" fill="none" stroke="#c8c8c8" />
          </Overlay>
          <Overlay $left="auto" $right="17px" $w={68} viewBox="0 0 68 60" aria-hidden="true">
            <path d="M35.500 2v30M35.500 37v23M3 34.500h30M38 34.500h30" stroke="#b8b8b8" />
            <circle cx="35.500" cy="34.500" r="2.500" fill="none" stroke="#fff" />
          </Overlay>

          <CommandBar>
            <Dots />
            <IconButton type="button" $w={13} aria-label="关闭命令行"><Icon name="close" size={11} grid={14} /></IconButton>
            <IconButton type="button" aria-label="命令行设置"><Icon name="wrench" size={12} grid={14} /></IconButton>
            <CommandField>
              <Icon name="prompt" size={12} grid={14} />
              <Icon name="caretDark" size={8} grid={14} />
              <CommandInput placeholder="键入命令" aria-label="命令" />
              <Icon name="caretUp" size={7} grid={14} />
            </CommandField>
          </CommandBar>
        </Canvas>
      </Workspace>

      <StatusBar>
        <Layouts>
          <IconButton $w={14} aria-label="布局菜单"><Icon name="menu" size={12} grid={14} /></IconButton>
          <LayoutTab $active>模型</LayoutTab>
          <LayoutTab>布局1</LayoutTab>
          <Slash />
          <LayoutTab>布局2</LayoutTab>
          <Slash />
          <IconButton $w={20} aria-label="新建布局"><Icon name="plus" size={10} grid={14} /></IconButton>
          <Slash />
        </Layouts>
        <Cell $w={47}>比例 1:100<Icon name="caret" size={8} grid={14} /></Cell>
        <Cell $w={93}>68319, 10136, 0</Cell>
        <Cell $w={21}>模型</Cell>
        <Modes>
          {modes.map(([icon, label, on, caret]) => (
            <React.Fragment key={label}>
              <Mode $on={on} aria-label={label}><Icon name={icon} size={13} grid={14} /></Mode>
              {caret ? <ModeCaret aria-label={`${label}选项`}><Icon name="caret" size={9} grid={14} /></ModeCaret> : null}
            </React.Fragment>
          ))}
          <Spring />
          <Mode aria-label="自定义"><Icon name="menu" size={11} grid={14} /></Mode>
        </Modes>
      </StatusBar>

      <SiteMark>www.dudues.com</SiteMark>
      <Brand>
        <BrandMark viewBox="0 0 20 18" aria-hidden="true">
          <path d="M4 1h7a8 8 0 0 1 0 16H3v-4h7a4 4 0 0 0 0-8H4z" fill="#fff" />
          <path d="M0 8h7v5H2z" fill="#fff" />
        </BrandMark>
        都都软件站
      </Brand>
    </Window>
  );
}
